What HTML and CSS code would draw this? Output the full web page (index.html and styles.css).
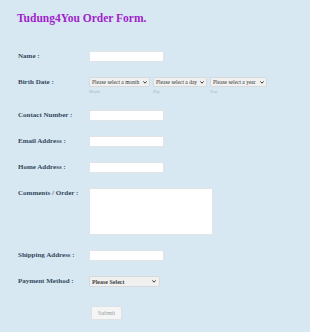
FILE: index.html
```html
<!DOCTYPE html>
<html lang="en">
<head>
<meta charset="UTF-8">
<title>Tudung4You Order Form</title>
<link rel="stylesheet" href="styles.css">
</head>
<body>
<form class="orderForm">
  <h1 class="formTitle">Tudung4You Order Form.</h1>

  <div class="row">
    <label class="fieldLabel">Name :</label>
    <input class="textBox" type="text">
  </div>

  <div class="row birthRow">
    <label class="fieldLabel">Birth Date :</label>
    <div class="dateGroup">
      <div class="datePart">
        <select class="dateSel monthSel"><option>Please select a month</option></select>
        <span class="subLabel">Month</span>
      </div>
      <div class="datePart">
        <select class="dateSel daySel"><option>Please select a day</option></select>
        <span class="subLabel">Day</span>
      </div>
      <div class="datePart">
        <select class="dateSel yearSel"><option>Please select a year</option></select>
        <span class="subLabel">Year</span>
      </div>
    </div>
  </div>

  <div class="row">
    <label class="fieldLabel">Contact Number :</label>
    <input class="textBox" type="text">
  </div>

  <div class="row">
    <label class="fieldLabel">Email Address :</label>
    <input class="textBox" type="text">
  </div>

  <div class="row">
    <label class="fieldLabel">Home Address :</label>
    <input class="textBox" type="text">
  </div>

  <div class="row">
    <label class="fieldLabel">Comments / Order :</label>
    <textarea class="commentBox"></textarea>
  </div>

  <div class="row">
    <label class="fieldLabel">Shipping Address :</label>
    <input class="textBox" type="text">
  </div>

  <div class="row">
    <label class="fieldLabel">Payment Method :</label>
    <select class="paySel"><option>Please Select</option></select>
  </div>

  <div class="row submitRow">
    <button class="submitBtn" type="button">Submit</button>
  </div>
</form>
</body>
</html>
```

FILE: styles.css
```css
html, body {margin: 0; padding: 0; background-color: #d7e8f2;}
body {font-family: "Liberation Serif", "Times New Roman", serif;}

.orderForm {padding: 11px 0 0 18px;}

.formTitle {margin: 0 0 25px -1px; font-size: 11.5px; line-height: 15px; font-weight: bold; color: #a11fcc;}

.row {display: flex; align-items: flex-start; margin-bottom: 15px;}
.fieldLabel {width: 71px; flex-shrink: 0; font-size: 7px; line-height: 11px; font-weight: bold; color: #34495e;}

.textBox {box-sizing: border-box; width: 75px; height: 11px; margin: 0; padding: 0 2px; border: 1px solid #e1e4e6; background: #fff; border-radius: 0; outline: none;}
.commentBox {box-sizing: border-box; width: 124px; height: 47px; margin: 0; padding: 2px; border: 1px solid #e1e4e6; background: #fff; border-radius: 0; resize: none;}

.birthRow .fieldLabel {line-height: 10px;}
.dateGroup {display: flex; gap: 3px;}
.datePart {display: flex; flex-direction: column;}
.dateSel, .paySel {-webkit-appearance: none; appearance: none; box-sizing: border-box; height: 10px; margin: 0; padding: 0 7px 0 2px; border: 1px solid #d5d9dc; border-radius: 1px; font-family: "Liberation Serif", serif; font-size: 5.5px; line-height: 8px; color: #333;
  background: #f0f0f0 url("data:image/svg+xml,%3Csvg xmlns='http://www.w3.org/2000/svg' width='4' height='3' viewBox='0 0 4 3'%3E%3Cpath d='M0.4 0.4 L2 2.2 L3.6 0.4' fill='none' stroke='%23222' stroke-width='0.9'/%3E%3C/svg%3E") no-repeat right 2px center;}
.monthSel {width: 61px;}
.daySel {width: 54px;}
.yearSel {width: 57px;}
.subLabel {margin-top: 2px; font-size: 4px; line-height: 6px; color: #a9b3ba;}

.paySel {width: 71px; height: 11px; font-size: 6px; font-weight: bold; color: #444; background-position: right 3px center;}

.submitRow {padding: 4px 0 0 73px;}
.submitBtn {width: 31px; height: 14px; padding: 0; border: 1px solid #dfe2e4; border-radius: 1px; background: #f5f5f5; font-family: "Liberation Serif", serif; font-size: 6px; color: #9aa0a4;}
```
